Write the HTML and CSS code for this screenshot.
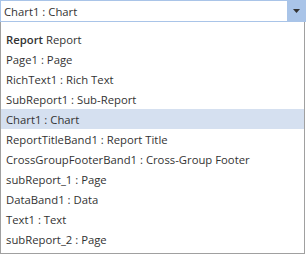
FILE: index.html
```html
<!DOCTYPE html>
<html lang="en">
<head>
    <meta charset="UTF-8">
    <title>Component list</title>
    <link rel="stylesheet" href="styles.css">
</head>
<body>

    <!-- Combo box -->
    <div class="combo">
        <span class="combo-text">Chart1 : Chart</span>
        <span class="combo-btn">
            <svg width="7" height="4" viewBox="0 0 7 4"><path d="M0 0H7L3.5 4Z" fill="#333"/></svg>
        </span>
    </div>

    <!-- Drop-down list -->
    <ul class="lista">
        <li><b>Report</b> Report</li>
        <li>Page1 : Page</li>
        <li>RichText1 : Rich Text</li>
        <li>SubReport1 : Sub-Report</li>
        <li class="sel">Chart1 : Chart</li>
        <li>ReportTitleBand1 : Report Title</li>
        <li>CrossGroupFooterBand1 : Cross-Group Footer</li>
        <li>subReport_1 : Page</li>
        <li>DataBand1 : Data</li>
        <li>Text1 : Text</li>
        <li>subReport_2 : Page</li>
    </ul>

</body>
</html>
```

FILE: styles.css
```css
body { margin: 0; font-family: "Open Sans", sans-serif; font-size: 11.3px; color: #333; background: #fff; width: 306px; height: 254px; overflow: hidden; }
.combo { display: flex; height: 20px; border: 1px solid #a9c4e8; background: #fff; }
.combo-text { flex: 1; padding-left: 3px; line-height: 21px; }
.combo-btn { width: 18px; background: #a9c4e8; display: flex; align-items: center; justify-content: center; }
.lista { list-style: none; margin: 0; padding: 7px 0 0 0; width: 303px; height: 224px; border: 1px solid #a0a0a0; border-top: none; overflow: hidden; }
.lista li { height: 20px; line-height: 21px; padding-left: 5px; }
.lista li.sel { background: #d5e0f0; }
.lista b { font-weight: 600; }
```
